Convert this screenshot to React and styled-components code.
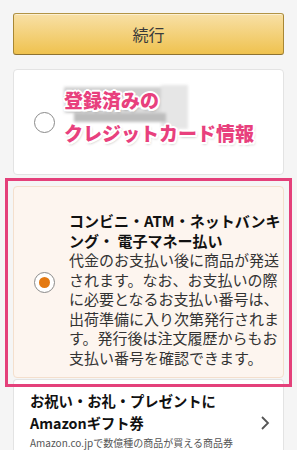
import React from "react";
import styled, { createGlobalStyle } from "styled-components";

const Global = createGlobalStyle`
  html, body { margin: 0; padding: 0; background: #f5f5f5; }
  body { font-family: "Noto Sans CJK JP", "Noto Sans", sans-serif; color: #111; }
`;

const Page = styled.div`
  width: 297px;
  height: 450px;
  overflow: hidden;
  box-sizing: border-box;
  padding: 13px 13px 0 13px;
  display: flex;
  flex-direction: column;
`;

const ContinueButton = styled.button`
  flex: none;
  height: 42px;
  width: 100%;
  border: 1px solid #a88734;
  border-color: #b29446 #a88734 #8d7232;
  border-radius: 3px;
  background: linear-gradient(to bottom, #f8e0a6, #efc24f);
  box-shadow: inset 0 1px 0 rgba(255,255,255,0.5);
  font-family: "Noto Sans CJK JP", sans-serif;
  font-size: 16px;
  color: #3a3a3a;
  padding: 0;
  margin-bottom: 14px;
`;

const Card = styled.div`
  flex: none;
  box-sizing: border-box;
  display: flex;
  align-items: center;
  border: 1px solid ${p => (p.$selected ? "#f4dfcd" : "#e3e3e3")};
  background: ${p => (p.$selected ? "#fdf5ef" : "#ffffff")};
  border-radius: 4px;
  height: ${p => p.$h}px;
  position: relative;
`;

const Radio = styled.span`
  flex: none;
  box-sizing: border-box;
  width: 21px;
  height: 21px;
  border-radius: 50%;
  border: 1px solid #8a8a8a;
  background: #fff;
  display: flex;
  align-items: center;
  justify-content: center;
  margin-left: 20px;
  margin-right: ${p => p.$gap}px;
  &::after {
    content: "";
    display: ${p => (p.$checked ? "block" : "none")};
    width: 11px;
    height: 11px;
    border-radius: 50%;
    background: #e47911;
  }
`;

const Censored = styled.div`
  position: relative;
  margin-top: -12px;
`;

const Mosaic = styled.div`
  position: absolute;
  left: 0;
  top: 2px;
  width: 124px;
  height: 44px;
  background:
    linear-gradient(#bdbdbd, #bdbdbd) 10px 28px / 92px 9px no-repeat,
    linear-gradient(#d0d0d0, #d0d0d0) 0 2px / 97px 12px no-repeat,
    linear-gradient(#e6e6e6, #e6e6e6) 97px 0 / 27px 44px no-repeat,
    linear-gradient(#dcdcdc, #dcdcdc) 0 14px / 110px 14px no-repeat;
  filter: blur(1.5px);
`;

const Annotation = styled.div`
  position: relative;
  font-family: "Noto Sans CJK JP", sans-serif;
  font-weight: 900;
  font-size: 19px;
  line-height: 33px;
  color: #e8407d;
  white-space: nowrap;
  text-shadow:
    -2px 0 0 #fff, 2px 0 0 #fff, 0 -2px 0 #fff, 0 2px 0 #fff,
    -1.5px -1.5px 0 #fff, 1.5px 1.5px 0 #fff, -1.5px 1.5px 0 #fff, 1.5px -1.5px 0 #fff,
    1px 2px 3px rgba(0,0,0,0.35);
`;

const Highlight = styled.div`
  flex: none;
  position: relative;
  margin-top: 11px;
`;

const HighlightFrame = styled.div`
  position: absolute;
  left: -8px;
  right: -8px;
  top: -8px;
  bottom: -9px;
  border: 3px solid #e4407a;
  pointer-events: none;
  z-index: 2;
`;

const Body = styled.div`
  align-self: flex-start;
  padding-top: 24px;
  font-size: 15px;
  line-height: 19.5px;
  white-space: nowrap;
`;

const Title = styled.div`
  font-weight: 700;
  color: #111;
`;

const Desc = styled.div`
  color: #333;
`;

const GiftCard = styled.div`
  box-sizing: border-box;
  margin-top: 1px;
  flex: 1;
  background: #fff;
  border: 1px solid #e3e3e3;
  border-bottom: none;
  border-radius: 4px 4px 0 0;
  display: flex;
  align-items: flex-start;
  padding: 10px 12px 0 16px;
`;

const GiftText = styled.div`
  flex: 1;
`;

const GiftTitle = styled.div`
  font-weight: 700;
  font-size: 14.3px;
  line-height: 22px;
  color: #111;
  white-space: nowrap;
`;

const GiftSub = styled.div`
  font-size: 10px;
  line-height: 18px;
  color: #555;
  white-space: nowrap;
`;

const Chevron = styled.svg`
  flex: none;
  margin-top: 25px;
  margin-right: 1px;
`;

export default function App() {
  return (
    <>
      <Global />
      <Page>
        <ContinueButton>続行</ContinueButton>
        <Card $h={106}>
          <Radio $gap={9} />
          <Censored>
            <Mosaic />
            <Annotation>
              登録済みの
              <br />
              クレジットカード情報
            </Annotation>
          </Censored>
        </Card>
        <Highlight>
          <HighlightFrame />
          <Card $selected $h={192}>
            <Radio $checked $gap={14} />
            <Body>
              <Title>
                コンビニ・ATM・ネットバンキ
                <br />
                ング・ 電子マネー払い
              </Title>
              <Desc>
                代金のお支払い後に商品が発送
                <br />
                されます。なお、お支払いの際
                <br />
                に必要となるお支払い番号は、
                <br />
                出荷準備に入り次第発行されま
                <br />
                す。発行後は注文履歴からもお
                <br />
                支払い番号を確認できます。
              </Desc>
            </Body>
          </Card>
        </Highlight>
        <GiftCard>
          <GiftText>
            <GiftTitle>
              お祝い・お礼・プレゼントに
              <br />
              Amazonギフト券
            </GiftTitle>
            <GiftSub>Amazon.co.jpで数億種の商品が買える商品券</GiftSub>
          </GiftText>
          <Chevron width="10" height="16" viewBox="0 0 10 16">
            <path d="M2 2 L8 8 L2 14" fill="none" stroke="#555" strokeWidth="1.8" />
          </Chevron>
        </GiftCard>
      </Page>
    </>
  );
}
